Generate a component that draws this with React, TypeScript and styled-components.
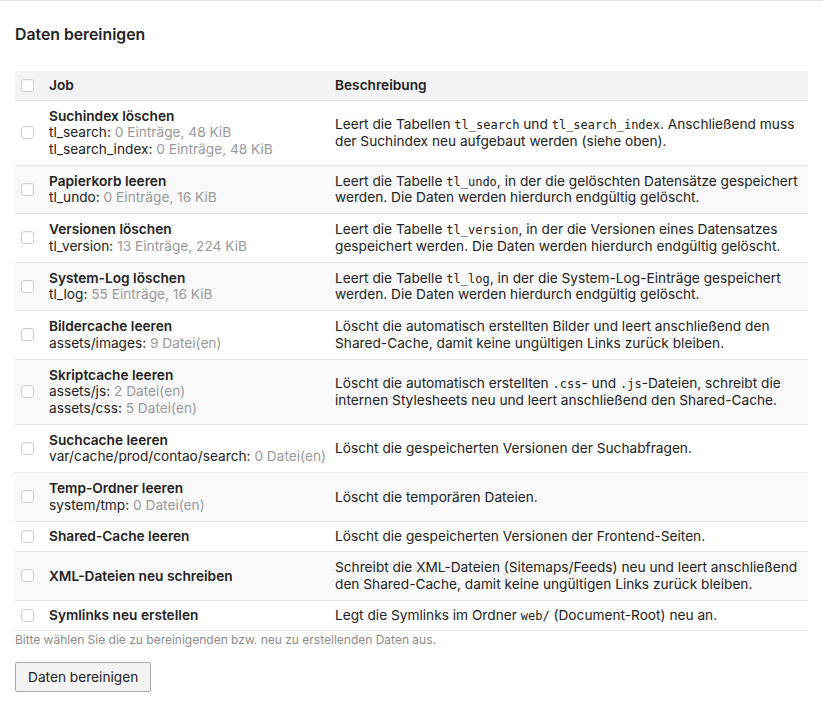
import * as React from 'react';
import styled, { createGlobalStyle } from 'styled-components';

const GlobalStyle = createGlobalStyle`
	html, body {
		margin: 0;
		padding: 0;
		background: #fff;
	}
	body {
		font-family: Inter, "Liberation Sans", sans-serif;
		font-size: 13.7px;
		color: #222;
	}
`;

const Page = styled.div`
	border-top: 1px solid #e6e6e6;
	padding: 0 15px 20px;
`;

const Heading = styled.h2`
	margin: 0;
	padding-top: 24px;
	font-size: 15.8px;
	line-height: 20px;
	font-weight: 600;
	color: #222;
`;

const Listing = styled.table`
	margin-top: 26px;
	width: 793px;
	border-collapse: collapse;
	table-layout: fixed;
`;

const HeadCell = styled.th`
	padding: 6px 6px;
	line-height: 16.5px;
	text-align: left;
	font-weight: 600;
	background: #f3f3f5;
	border-bottom: 1px solid #e6e6e6;
	vertical-align: middle;
`;

const Row = styled.tr`
	&:nth-child(even) td {
		background: #f9f9fb;
	}
`;

const Cell = styled.td<{ $nowrap?: boolean; $compact?: boolean }>`
	padding: ${p => (p.$compact ? '6.5px 6px' : '7.25px 6px')};
	line-height: 16.5px;
	vertical-align: middle;
	border-bottom: 1px solid #e6e6e6;
	white-space: ${p => (p.$nowrap ? 'nowrap' : 'normal')};
`;

const Check = styled.input.attrs(() => ({
	type: 'checkbox',
}))`
	appearance: none;
	display: block;
	margin: 0;
	width: 13px;
	height: 13px;
	border: 1px solid #cfcfcf;
	border-radius: 3px;
	background: #fff;
	box-shadow: inset 0 1px 1px rgba(0, 0, 0, 0.04);
`;

const JobTitle = styled.strong`
	display: block;
	font-weight: 600;
`;

const Stat = styled.div`
	color: #222;
`;

const Muted = styled.span`
	color: #999;
`;

const Line = styled.span`
	display: block;
`;

const Code = styled.code`
	font-family: "DejaVu Sans Mono", "Liberation Mono", monospace;
	font-size: 12px;
	line-height: 1;
`;

const Hint = styled.p`
	margin: 1px 0 0;
	font-size: 12px;
	line-height: 16px;
	color: #8c8c8c;
`;

const Submit = styled.button`
	margin-top: 14px;
	height: 30px;
	padding: 0 12px;
	font-family: Inter, "Liberation Sans", sans-serif;
	font-size: 13.7px;
	color: #222;
	background: #f3f3f3;
	border: 1px solid #aaa;
	border-radius: 2px;
`;

interface Job {
	title: string;
	stats: [string, string][];
	desc: React.ReactNode;
	compact?: boolean;
}

const jobs: Job[] = [
	{
		title: 'Suchindex löschen',
		stats: [
			['tl_search', '0 Einträge, 48 KiB'],
			['tl_search_index', '0 Einträge, 48 KiB'],
		],
		desc: (
			<>
				<Line>
					Leert die Tabellen <Code>tl_search</Code> und <Code>tl_search_index</Code>. Anschließend muss
				</Line>
				<Line>der Suchindex neu aufgebaut werden (siehe oben).</Line>
			</>
		),
	},
	{
		title: 'Papierkorb leeren',
		stats: [['tl_undo', '0 Einträge, 16 KiB']],
		desc: (
			<>
				<Line>
					Leert die Tabelle <Code>tl_undo</Code>, in der die gelöschten Datensätze gespeichert
				</Line>
				<Line>werden. Die Daten werden hierdurch endgültig gelöscht.</Line>
			</>
		),
	},
	{
		title: 'Versionen löschen',
		stats: [['tl_version', '13 Einträge, 224 KiB']],
		desc: (
			<>
				<Line>
					Leert die Tabelle <Code>tl_version</Code>, in der die Versionen eines Datensatzes
				</Line>
				<Line>gespeichert werden. Die Daten werden hierdurch endgültig gelöscht.</Line>
			</>
		),
	},
	{
		title: 'System-Log löschen',
		stats: [['tl_log', '55 Einträge, 16 KiB']],
		desc: (
			<>
				<Line>
					Leert die Tabelle <Code>tl_log</Code>, in der die System-Log-Einträge gespeichert
				</Line>
				<Line>werden. Die Daten werden hierdurch endgültig gelöscht.</Line>
			</>
		),
	},
	{
		title: 'Bildercache leeren',
		stats: [['assets/images', '9 Datei(en)']],
		desc: (
			<>
				<Line>Löscht die automatisch erstellten Bilder und leert anschließend den</Line>
				<Line>Shared-Cache, damit keine ungültigen Links zurück bleiben.</Line>
			</>
		),
	},
	{
		title: 'Skriptcache leeren',
		stats: [
			['assets/js', '2 Datei(en)'],
			['assets/css', '5 Datei(en)'],
		],
		desc: (
			<>
				<Line>
					Löscht die automatisch erstellten <Code>.css</Code>- und <Code>.js</Code>-Dateien, schreibt die
				</Line>
				<Line>internen Stylesheets neu und leert anschließend den Shared-Cache.</Line>
			</>
		),
	},
	{
		title: 'Suchcache leeren',
		stats: [['var/cache/prod/contao/search', '0 Datei(en)']],
		desc: 'Löscht die gespeicherten Versionen der Suchabfragen.',
	},
	{
		title: 'Temp-Ordner leeren',
		stats: [['system/tmp', '0 Datei(en)']],
		desc: 'Löscht die temporären Dateien.',
	},
	{
		title: 'Shared-Cache leeren',
		stats: [],
		desc: 'Löscht die gespeicherten Versionen der Frontend-Seiten.',
		compact: true,
	},
	{
		title: 'XML-Dateien neu schreiben',
		stats: [],
		desc: (
			<>
				<Line>Schreibt die XML-Dateien (Sitemaps/Feeds) neu und leert anschließend</Line>
				<Line>den Shared-Cache, damit keine ungültigen Links zurück bleiben.</Line>
			</>
		),
	},
	{
		title: 'Symlinks neu erstellen',
		stats: [],
		desc: (
			<>
				Legt die Symlinks im Ordner <Code>web/</Code> (Document-Root) neu an.
			</>
		),
		compact: true,
	},
];

export default function App() {
	return (
		<>
			<GlobalStyle />
			<Page>
				<Heading>Daten bereinigen</Heading>
				<Listing>
					<colgroup>
						<col style={{ width: 28 }} />
						<col style={{ width: 286 }} />
						<col />
					</colgroup>
					<thead>
						<tr>
							<HeadCell>
								<Check />
							</HeadCell>
							<HeadCell>Job</HeadCell>
							<HeadCell>Beschreibung</HeadCell>
						</tr>
					</thead>
					<tbody>
						{jobs.map(job => (
							<Row key={job.title}>
								<Cell $compact={job.compact}>
									<Check />
								</Cell>
								<Cell $nowrap $compact={job.compact}>
									<JobTitle>{job.title}</JobTitle>
									{job.stats.map(([label, value]) => (
										<Stat key={label}>
											{label}: <Muted>{value}</Muted>
										</Stat>
									))}
								</Cell>
								<Cell $compact={job.compact}>{job.desc}</Cell>
							</Row>
						))}
					</tbody>
				</Listing>
				<Hint>Bitte wählen Sie die zu bereinigenden bzw. neu zu erstellenden Daten aus.</Hint>
				<Submit>Daten bereinigen</Submit>
			</Page>
		</>
	);
}
